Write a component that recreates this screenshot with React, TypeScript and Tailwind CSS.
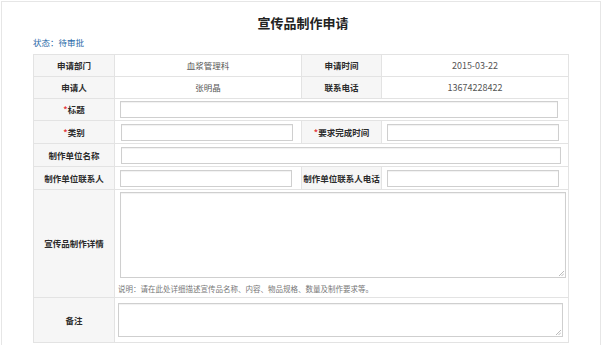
import React from 'react';

const font = { fontFamily: '"Noto Sans CJK SC", "Liberation Sans", sans-serif' };

function Label({ text, required = false }: { text: string; required?: boolean }) {
  return (
    <td className="border border-[#e3e3e3] bg-[#f6f6f6] text-center align-middle text-[8.5px] font-bold text-[#2b2b2b]">
      {required && <span className="text-[#e4393c]">*</span>}
      {text}
    </td>
  );
}

function Field({ w }: { w: string }) {
  return <div className={`h-[17px] border border-[#cfcfcf] bg-white shadow-[inset_0_1px_1px_rgba(0,0,0,0.06)] ${w}`}></div>;
}

function Area({ h, w }: { h: string; w: string }) {
  return (
    <div className={`relative border border-[#cfcfcf] bg-white shadow-[inset_0_1px_1px_rgba(0,0,0,0.06)] ${h} ${w}`}>
      {/* resize grip */}
      <svg className="absolute bottom-[1px] right-[1px]" width="6" height="6" viewBox="0 0 6 6">
        <path d="M6 1 L1 6 M6 3.5 L3.5 6" stroke="#aaa" strokeWidth="0.8" />
      </svg>
    </div>
  );
}

export default function App() {
  return (
    <div className="h-[345px] w-[605px] overflow-hidden bg-white" style={font}>
      <div className="ml-[1px] mt-[1px] h-[350px] w-[600px] border-l border-t border-r border-[#e6e6e6] pl-[31px] pt-[12px]">
        <h1 className="w-[540px] text-center text-[13px] font-bold leading-[18px] text-[#222]">宣传品制作申请</h1>
        <div className="mt-[3px] text-[8.5px] leading-[14px] text-[#2a6aa8]">状态：待审批</div>
        <table className="mt-[5px] w-[535px] table-fixed border-collapse text-[8.5px] text-[#555]">
          <colgroup>
            <col className="w-[81px]" />
            <col className="w-[187px]" />
            <col className="w-[80px]" />
            <col className="w-[187px]" />
          </colgroup>
          <tbody>
            <tr className="h-[22px]">
              <Label text="申请部门" />
              <td className="border border-[#e3e3e3] text-center">血浆管理科</td>
              <Label text="申请时间" />
              <td className="border border-[#e3e3e3] text-center text-[9px]">2015-03-22</td>
            </tr>
            <tr className="h-[22px]">
              <Label text="申请人" />
              <td className="border border-[#e3e3e3] text-center">张明晶</td>
              <Label text="联系电话" />
              <td className="border border-[#e3e3e3] text-center text-[9px]">13674228422</td>
            </tr>
            <tr className="h-[22px]">
              <Label text="标题" required />
              <td colSpan={3} className="border border-[#e3e3e3] pl-[5px]">
                <Field w="w-[438px]" />
              </td>
            </tr>
            <tr className="h-[23px]">
              <Label text="类别" required />
              <td className="border border-[#e3e3e3] pl-[6px]">
                <Field w="w-[172px]" />
              </td>
              <Label text="要求完成时间" required />
              <td className="border border-[#e3e3e3] pl-[5px]">
                <Field w="w-[172px]" />
              </td>
            </tr>
            <tr className="h-[23px]">
              <Label text="制作单位名称" />
              <td colSpan={3} className="border border-[#e3e3e3] pl-[6px]">
                <Field w="w-[440px]" />
              </td>
            </tr>
            <tr className="h-[23px]">
              <Label text="制作单位联系人" />
              <td className="border border-[#e3e3e3] pl-[5px]">
                <Field w="w-[172px]" />
              </td>
              <Label text="制作单位联系人电话" />
              <td className="border border-[#e3e3e3] pl-[5px]">
                <Field w="w-[172px]" />
              </td>
            </tr>
            <tr className="h-[108px]">
              <Label text="宣传品制作详情" />
              <td colSpan={3} className="border border-[#e3e3e3] pl-[5px] pt-[2px] align-top">
                <Area h="h-[86px]" w="w-[446px]" />
                <div className="-ml-[2px] mt-[5px] text-[7.5px] leading-[12px] text-[#777]">
                  说明：请在此处详细描述宣传品名称、内容、物品规格、数量及制作要求等。
                </div>
              </td>
            </tr>
            <tr className="h-[45px]">
              <Label text="备注" />
              <td colSpan={3} className="border border-[#e3e3e3] pl-[3px] pt-[5px] align-top">
                <Area h="h-[34px]" w="w-[445px]" />
              </td>
            </tr>
          </tbody>
        </table>
      </div>
    </div>
  );
}
